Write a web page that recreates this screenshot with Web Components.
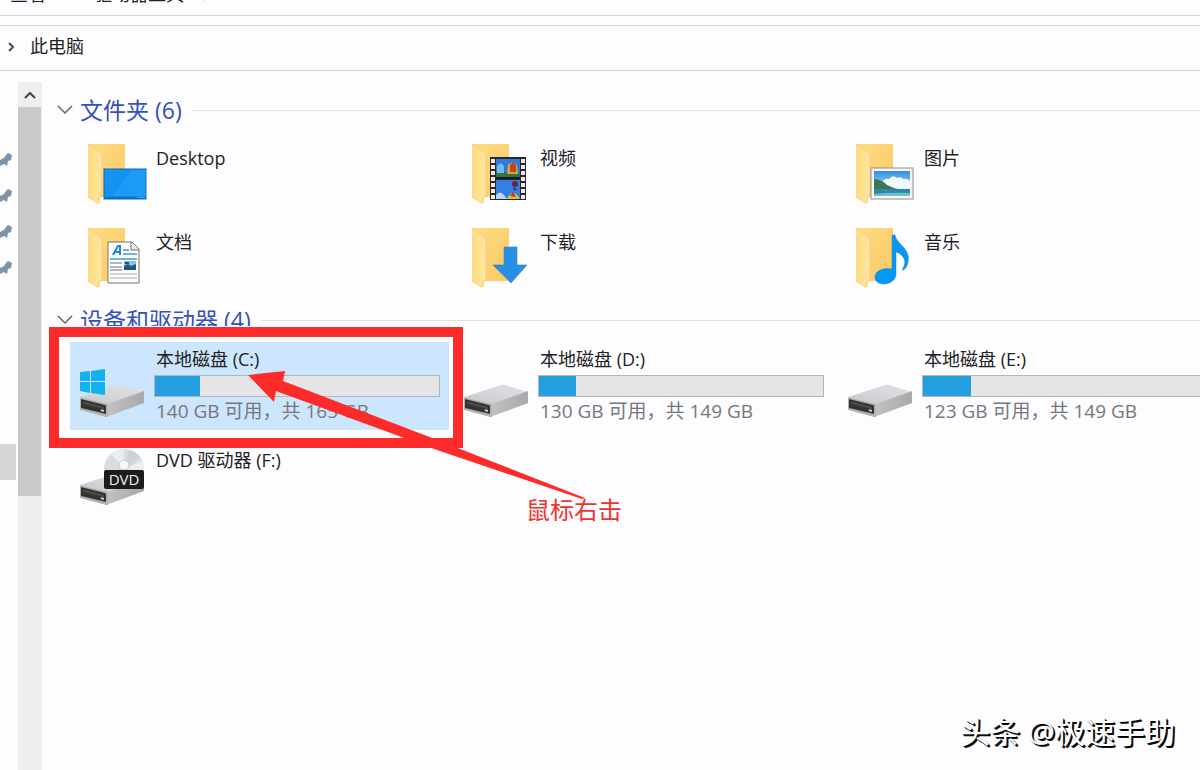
<!DOCTYPE html>
<html lang="zh-CN">
<head>
<meta charset="utf-8">
<title>此电脑</title>
<style>
  body {
    margin: 0;
    min-height: 100vh;
    display: flex;
    background: #fdfcfe;
    color: #222;
    font: 18px/24px "Open Sans", "Noto Sans CJK SC", sans-serif;
    overflow: hidden;
  }
</style>
</head>
<body>
<explorer-window>
  <ribbon-tabs slot="top"></ribbon-tabs>
  <address-bar slot="top">此电脑</address-bar>
  <nav-strip slot="side"></nav-strip>
  <scroll-rail slot="side"></scroll-rail>

  <item-group label="文件夹 (6)" class="folders">
    <folder-tile icon="desktop">Desktop</folder-tile>
    <folder-tile icon="video">视频</folder-tile>
    <folder-tile icon="picture">图片</folder-tile>
    <folder-tile icon="document">文档</folder-tile>
    <folder-tile icon="download">下载</folder-tile>
    <folder-tile icon="music">音乐</folder-tile>
  </item-group>

  <item-group label="设备和驱动器 (4)" class="drives">
    <drive-tile icon="system" used="16" space="140 GB 可用，共 165 GB" selected>本地磁盘 (C:)</drive-tile>
    <drive-tile icon="disk" used="13" space="130 GB 可用，共 149 GB">本地磁盘 (D:)</drive-tile>
    <drive-tile icon="disk" used="17" space="123 GB 可用，共 149 GB">本地磁盘 (E:)</drive-tile>
    <drive-tile icon="dvd">DVD 驱动器 (F:)</drive-tile>
  </item-group>

  <click-hint slot="overlay">鼠标右击</click-hint>
  <author-mark slot="overlay">头条 @极速手助</author-mark>
</explorer-window>

<script>
  const folderBase = `
    <defs>
      <linearGradient id="back" x1="0" y1="0" x2="1" y2="1">
        <stop offset="0" stop-color="#ffdc82"/><stop offset="1" stop-color="#fac864"/>
      </linearGradient>
      <linearGradient id="flap" x1="0" y1="0" x2="1" y2="0">
        <stop offset="0" stop-color="#ffd980"/><stop offset="1" stop-color="#ffe7a4"/>
      </linearGradient>
    </defs>
    <path d="M8 3h36q1 0 1 1v52H20L8 3z" fill="url(#back)"/>
    <path d="M8 3l11 7q3 2 3 6v38l-3 2v6q-1 2-3 0L8 57z" fill="url(#flap)"/>
    <path d="M8 3l11 7q3 2 3 6v38" fill="none" stroke="#f7cc78" stroke-width="1"/>
    <path d="M19 62v-5l3-3" fill="none" stroke="#efbd60" stroke-width="1"/>`;

  const folderIcons = {
    desktop: `
      <linearGradient id="scr" x1="0" y1="0" x2="1" y2="1">
        <stop offset="0" stop-color="#1a94f2"/><stop offset="1" stop-color="#0b8df0"/>
      </linearGradient>
      <rect x="24" y="28" width="42" height="30" fill="url(#scr)" stroke="#1268b4"/>
      <path d="M52 29h13.500v26H32z" fill="#1d99f6"/>
      <path d="M24 56h42v2H24z" fill="#0c6dbb"/><path d="M57 56h8v1h-8z" fill="#38aaf5"/>`,
    video: `
      <rect x="26" y="16" width="36" height="43" fill="#26282f"/>
      <path d="M29 18v40M59 18v40" stroke="#f4ead9" stroke-width="4" stroke-dasharray="4 2"/>
      <rect x="32" y="18" width="24" height="18" fill="#3279df"/>
      <rect x="32" y="39" width="24" height="19" fill="#347fe4"/>
      <path d="M32 31q5-4 9 0l15 1v4H32z" fill="#387242"/>
      <path d="M33 25l4-3 3 3v7h-7z" fill="#70bcf0"/>
      <path d="M44 24q4-5 9 0l1 9H43z" fill="#d6a936"/><path d="M46 24l3-3 3 3v7h-6z" fill="#bd4627"/>
      <circle cx="51" cy="43" r="3" fill="#6c243a"/><path d="M50 46l-1 3h4z" fill="#29336d"/>
      <path d="M32 54q4-5 8 0l3 4H32z" fill="#b7d9ef"/>
      <path d="M43 58q5-10 11-3l2 3z" fill="#e8bd3c"/><path d="M46 55l3-4 3 5z" fill="#b63a2b"/>
      <path d="M32 37h24" stroke="#171b28" stroke-width="2"/>`,
    picture: `
      <linearGradient id="sky" x1="0" y1="0" x2="0" y2="1">
        <stop offset="0" stop-color="#328fe2"/><stop offset="1" stop-color="#d7efff"/>
      </linearGradient>
      <rect x="23" y="27" width="42" height="31" fill="#f5f7fa" stroke="#9d8983"/>
      <rect x="26" y="30" width="36" height="25" fill="url(#sky)"/>
      <path d="M34 42q2-5 7-4 4-5 8-1 4-2 6 1 4-1 7 2v8H34z" fill="#f3faff"/>
      <path d="M26 38q9 1 13 6 6 3 11 4l12 1H26z" fill="#39794d"/>
      <path d="M26 48h36v7H26z" fill="#3485ad"/>
      <path d="M26 53q15-2 36-1v3H26z" fill="#6fc0cb"/>`,
    document: `
      <path d="M28 17h24l7 7v34H28z" fill="#fdfdfd" stroke="#77706f"/>
      <path d="M51 17v8h8" fill="#e9e9ec" stroke="#77706f"/>
      <path d="M33 30l5-9h2v9M35 27h5" fill="none" stroke="#1789d6" stroke-width="2"/>
      <path d="M43 25h6M43 29h14M30 34h27" stroke="#6fb3df" stroke-width="2"/>
      <path d="M30 38h12M30 42h12M30 45h12" stroke="#b5b5ba" stroke-width="2"/>
      <rect x="44" y="36" width="12" height="9" fill="#83c5e8"/>
      <path d="M44 41l4-2 3 2 5-2v6H44z" fill="#24577f"/><path d="M45 38h4" stroke="#1c537b" stroke-width="2"/>
      <path d="M30 49h27M30 53h27" stroke="#a9a9ae"/>`,
    download: `<path d="M40 22h13v18h10L47 58 29 40h11z" fill="#288fe7" stroke="#3b83bd" stroke-width=".6"/>`,
    music: `
      <path d="M44 10h3c1 9 16 13 13 27-1 5-3 8-6 8 3-5 4-9 1-13-2-3-4-4-7-5v22c0 6-6 10-12 10s-9-3-9-7c0-6 8-10 17-8z" fill="#0797f4" stroke="#2683c3" stroke-width=".5"/>`
  };

  const driveBody = `
    <defs>
      <linearGradient id="top" x1="0" y1="1" x2="1" y2="0">
        <stop offset="0" stop-color="#c9c9cc"/><stop offset="1" stop-color="#e2e2e6"/>
      </linearGradient>
      <linearGradient id="side" x1="0" y1="0" x2="1" y2="0">
        <stop offset="0" stop-color="#c2c2c5"/><stop offset="1" stop-color="#a9a9ac"/>
      </linearGradient>
    </defs>
    <path d="M0 55l37-12q2-1 4 0l23 7-36 13z" fill="url(#top)"/>
    <path d="M28 62l36-13v12L29 74q-2 1-3 1z" fill="url(#side)"/>
    <path d="M0 55l28 7v13h-2L0 68z" fill="#b4b4b7"/>
    <path d="M1 57l24 6q1 0 1 2v7L1 66z" fill="#30352f"/>
    <path d="M3 59l21 6v2L3 62z" fill="#464c45"/>
    <path d="M20 69l4 1v-2l-2-1z" fill="#b9c4b8"/>`;

  const driveIcons = {
    disk: driveBody,
    system: driveBody + `
      <path d="M0 30l10-1v10H0zM11 29l14-2v12H11zM0 40h10v11l-10-2zM11 40h14v13l-14-2z" fill="#13b2ee"/>`,
    dvd: `
      <g transform="translate(0 -13)">${driveBody}</g>
      <circle cx="44" cy="26" r="20" fill="#d9dde0"/>
      <path d="M44 26L31 11q6-5 13-5zM44 26l18-8q2 5 2 9z" fill="#eceef0"/>
      <path d="M44 26l5-19q7 2 11 7z" fill="#cdd2d6"/>
      <circle cx="44" cy="22" r="5" fill="#f6f7f8" stroke="#c5cacf"/>
      <rect x="24" y="27" width="40" height="19" rx="2" fill="#1c1c1d"/>
      <text x="44" y="42" text-anchor="middle" font-size="15" fill="#ededed">DVD</text>`
  };

  class ExplorerWindow extends HTMLElement {
    connectedCallback() {
      this.attachShadow({ mode: 'open' }).innerHTML = `
        <style>
          :host { flex: 1; min-width: 0; display: flex; flex-direction: column; position: relative; overflow: hidden; }
          .body { flex: 1; display: flex; }
          .side { display: flex; padding-top: 11px; }
          main { flex: 1; min-width: 0; padding: 24px 0 24px 14px; display: flex; flex-direction: column; gap: 6px; }
        </style>
        <slot name="top"></slot>
        <div class="body">
          <div class="side"><slot name="side"></slot></div>
          <main><slot></slot></main>
        </div>
        <slot name="overlay"></slot>
      `;
    }
  }

  class RibbonTabs extends HTMLElement {
    connectedCallback() {
      this.attachShadow({ mode: 'open' }).innerHTML = `
        <style>
          /* ribbon is scrolled up, only the lower edge of the tabs shows */
          :host { display: block; height: 16px; overflow: hidden; border-bottom: 1px solid #d3d2d5; box-sizing: border-box; }
          nav { display: flex; gap: 48px; padding-left: 10px; margin-top: -18px; }
          button { all: unset; line-height: 24px; }
          .line { width: 1px; height: 20px; margin-left: -28px; background: #dddce0; }
        </style>
        <nav>
          <button>查看</button>
          <button>驱动器工具</button>
          <span class="line"></span>
        </nav>
      `;
    }
  }

  class AddressBar extends HTMLElement {
    connectedCallback() {
      this.attachShadow({ mode: 'open' }).innerHTML = `
        <style>
          :host {
            display: flex; align-items: center; gap: 14px; height: 40px; margin-top: 9px; padding: 0 0 4px 6px;
            border-top: 1px solid #d6d5d8; border-bottom: 1px solid #d3d2d5;
          }
          svg { width: 10px; height: 12px; }
          button { all: unset; }
        </style>
        <svg viewBox="0 0 10 12"><path d="M3 3l4 4-4 4" fill="none" stroke="#4b4f5b" stroke-width="2"/></svg>
        <button><slot></slot></button>
      `;
    }
  }

  class NavStrip extends HTMLElement {
    connectedCallback() {
      const pin = `<svg viewBox="0 0 14 16"><path d="M8 1l4 2-1 5-3 1-1 5-3-2-4 2V8l4-2 2-3z" fill="#7f93a8"/></svg>`;
      this.attachShadow({ mode: 'open' }).innerHTML = `
        <style>
          :host { display: block; width: 18px; padding-top: 70px; box-sizing: border-box; }
          .pins { display: flex; flex-direction: column; gap: 20px; }
          svg { display: block; width: 14px; height: 16px; }
          .current { width: 16px; height: 36px; margin-top: 168px; background: #d6d6d8; }
        </style>
        <div class="pins">${pin.repeat(4)}</div>
        <div class="current"></div>
      `;
    }
  }

  class ScrollRail extends HTMLElement {
    connectedCallback() {
      this.attachShadow({ mode: 'open' }).innerHTML = `
        <style>
          :host { display: flex; flex-direction: column; width: 24px; background: #efeef0; }
          button { all: unset; display: flex; justify-content: center; align-items: center; height: 25px; }
          svg { width: 12px; height: 10px; }
          .thumb { height: 389px; margin-right: 1px; background: #c9c8ca; }
        </style>
        <button aria-label="向上滚动">
          <svg viewBox="0 0 12 10"><path d="M1 8l5-5 5 5" fill="none" stroke="#444" stroke-width="2"/></svg>
        </button>
        <div class="thumb"></div>
      `;
    }
  }

  class ItemGroup extends HTMLElement {
    connectedCallback() {
      this.attachShadow({ mode: 'open' }).innerHTML = `
        <style>
          :host { display: block; }
          header { display: flex; align-items: center; gap: 11px; }
          header::after { content: ""; flex: 1; height: 1px; background: #e2e1e5; }
          h2 { margin: 0; font-size: 23px; line-height: 30px; font-weight: 400; }
          button { all: unset; display: flex; align-items: center; gap: 6px; color: #3350bd; }
          svg { width: 18px; height: 12px; }
          .grid { display: grid; grid-template-columns: repeat(3, 379px); gap: 10px 5px; padding: 16px 0 0 14px; }
          :host(.drives) .grid { row-gap: 13px; padding-top: 7px; }
        </style>
        <header>
          <h2><button aria-expanded="true">
            <svg viewBox="0 0 18 12"><path d="M2 2l7 7 7-7" fill="none" stroke="#666" stroke-width="1.500"/></svg>
            ${this.getAttribute('label')}
          </button></h2>
        </header>
        <div class="grid"><slot></slot></div>
      `;
    }
  }

  class FolderTile extends HTMLElement {
    connectedCallback() {
      this.attachShadow({ mode: 'open' }).innerHTML = `
        <style>
          :host { display: block; }
          a { display: flex; gap: 4px; height: 74px; padding-left: 10px; color: inherit; text-decoration: none; }
          svg { width: 72px; height: 72px; }
          span { padding-top: 5px; }
        </style>
        <a href="#">
          <svg viewBox="0 0 72 72" aria-hidden="true">${folderBase}${folderIcons[this.getAttribute('icon')]}</svg>
          <span><slot></slot></span>
        </a>
      `;
    }
  }

  class DriveTile extends HTMLElement {
    connectedCallback() {
      const used = this.getAttribute('used');
      const usage = used ? `
        <progress max="100" value="${used}" aria-label="已用空间"></progress>
        <span class="space">${this.getAttribute('space')}</span>` : '';
      this.attachShadow({ mode: 'open' }).innerHTML = `
        <style>
          :host { display: block; }
          :host([selected]) { background: #cce6fe; }
          a { display: flex; gap: 2px; min-height: 88px; padding-left: 10px; box-sizing: border-box; color: inherit; text-decoration: none; }
          svg { width: 72px; height: 80px; }
          .info { display: flex; flex-direction: column; gap: 3px; padding-top: 5px; }
          .info span { padding-left: 2px; }
          progress {
            appearance: none; display: block; width: 286px; height: 22px; box-sizing: border-box;
            border: 1px solid #b5b4b8; background: #e5e4e6; margin-top: 1px;
          }
          progress::-webkit-progress-bar { background: #e5e4e6; }
          progress::-webkit-progress-value { background: #249fdf; }
          .info .space { font-size: 19px; line-height: 22px; color: #77777b; }
        </style>
        <a href="#">
          <svg viewBox="0 0 72 80" aria-hidden="true">${driveIcons[this.getAttribute('icon')]}</svg>
          <div class="info">
            <span><slot></slot></span>${usage}
          </div>
        </a>
      `;
    }
  }

  // red frame and arrow drawn over the C: drive
  class ClickHint extends HTMLElement {
    connectedCallback() {
      this.attachShadow({ mode: 'open' }).innerHTML = `
        <style>
          :host { position: absolute; left: 49px; top: 326px; width: 576px; height: 200px; pointer-events: none; }
          svg { position: absolute; inset: 0; width: 576px; height: 200px; }
          span { position: absolute; right: 3px; bottom: 1px; font-size: 24px; line-height: 30px; color: #f0332d; }
        </style>
        <svg viewBox="0 0 576 200" aria-hidden="true">
          <path d="M5 6h404v111H5z" fill="none" stroke="#fdfcfe" stroke-width="12"/>
          <path d="M5 6h404v111H5z" fill="none" stroke="#fd2c2b" stroke-width="10"/>
          <path d="M199 49l37-4-2 10 144 55 158 62-3 1-145-49-161-59-2 11z" fill="#fd2c2b"/>
        </svg>
        <span><slot></slot></span>
      `;
    }
  }

  class AuthorMark extends HTMLElement {
    connectedCallback() {
      this.attachShadow({ mode: 'open' }).innerHTML = `
        <style>
          :host {
            position: absolute; right: 25px; bottom: 18px; font-size: 30px; line-height: 40px;
            color: #fff; text-shadow: 1px 1px 1px #000, 2px 2px 0 #111;
          }
        </style>
        <slot></slot>
      `;
    }
  }

  customElements.define('explorer-window', ExplorerWindow);
  customElements.define('ribbon-tabs', RibbonTabs);
  customElements.define('address-bar', AddressBar);
  customElements.define('nav-strip', NavStrip);
  customElements.define('scroll-rail', ScrollRail);
  customElements.define('item-group', ItemGroup);
  customElements.define('folder-tile', FolderTile);
  customElements.define('drive-tile', DriveTile);
  customElements.define('click-hint', ClickHint);
  customElements.define('author-mark', AuthorMark);
</script>
</body>
</html>
